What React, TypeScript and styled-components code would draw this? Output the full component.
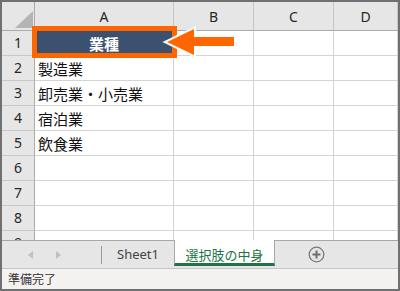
import React from "react";
import styled, { createGlobalStyle } from "styled-components";

const Global = createGlobalStyle`
  html, body { margin: 0; padding: 0; background: #fff; }
  body { font-family: "Noto Sans", "Noto Sans CJK JP", sans-serif; }
`;

const Frame = styled.div`
  width: 400px;
  height: 291px;
  box-sizing: border-box;
  border: 2px solid #707070;
  display: flex;
  flex-direction: column;
  overflow: hidden;
  background: #fff;
`;

const Sheet = styled.div`
  position: relative;
  height: 238px;
  flex: none;
  overflow: hidden;
`;

const Row = styled.div<{ $h: number }>`
  display: grid;
  grid-template-columns: 33px 139px 80px 80px 64px;
  height: ${(p) => p.$h}px;
`;

const Corner = styled.div`
  box-sizing: border-box;
  background: #e6e6e6;
  border-right: 1px solid #ababab;
  border-bottom: 1px solid #ababab;
  display: flex;
  align-items: flex-end;
  justify-content: flex-end;
  padding: 0 1px 2px 0;
`;

const ColHead = styled.div`
  box-sizing: border-box;
  background: #e6e6e6;
  border-right: 1px solid #c6c6c6;
  border-bottom: 1px solid #ababab;
  display: flex;
  align-items: center;
  justify-content: center;
  font-family: "Noto Sans", sans-serif;
  font-size: 14px;
  line-height: 1;
  color: #262626;
  padding-top: 2px;
`;

const RowHead = styled.div`
  box-sizing: border-box;
  background: #e6e6e6;
  border-right: 1px solid #ababab;
  border-bottom: 1px solid #c8c8c8;
  display: flex;
  align-items: center;
  justify-content: center;
  font-family: "Noto Sans", sans-serif;
  font-size: 14px;
  line-height: 1;
  color: #262626;
`;

const Cell = styled.div<{ $title?: boolean }>`
  box-sizing: border-box;
  border-right: 1px solid #d4d4d4;
  border-bottom: 1px solid #d4d4d4;
  display: flex;
  align-items: center;
  justify-content: ${(p) => (p.$title ? "center" : "flex-start")};
  padding-left: ${(p) => (p.$title ? 0 : 3)}px;
  background: ${(p) => (p.$title ? "#3b5170" : "#fff")};
  color: ${(p) => (p.$title ? "#fff" : "#111")};
  font-weight: ${(p) => (p.$title ? 700 : 400)};
  font-family: "Noto Sans CJK JP", sans-serif;
  font-size: 15px;
  line-height: 1;
  white-space: nowrap;
`;

const Highlight = styled.div`
  position: absolute;
  left: 30px;
  top: 24px;
  width: 145px;
  height: 32px;
  box-sizing: border-box;
  border: 5px solid #ff6600;
`;

const ArrowSvg = styled.svg`
  position: absolute;
  left: 158px;
  top: 20px;
`;

const TabBar = styled.div`
  height: 28px;
  box-sizing: border-box;
  flex: none;
  border-top: 1px solid #a8a8a8;
  background: #e6e6e6;
  display: flex;
  align-items: center;
`;

const NavArea = styled.div`
  width: 99px;
  height: 100%;
  display: flex;
  align-items: center;
  padding-left: 26px;
  gap: 23px;
  box-sizing: border-box;
`;

const Divider = styled.div`
  width: 1px;
  height: 18px;
  background: #9a9a9a;
  align-self: center;
`;

const Tab = styled.div`
  width: 72px;
  height: 100%;
  display: flex;
  align-items: center;
  justify-content: center;
  font-family: "Noto Sans", "Noto Sans CJK JP", sans-serif;
  font-size: 13px;
  line-height: 1;
  color: #444;
`;

const ActiveTab = styled.div`
  width: 101px;
  height: 26px;
  box-sizing: border-box;
  align-self: flex-start;
  margin-top: -1px;
  background: #fff;
  border-left: 1px solid #a8a8a8;
  border-right: 1px solid #a8a8a8;
  border-bottom: 3px solid #217346;
  display: flex;
  align-items: center;
  justify-content: center;
  padding-top: 5px;
  font-family: "Noto Sans CJK JP", sans-serif;
  font-size: 13px;
  line-height: 1;
  color: #217346;
`;

const AddButton = styled.div`
  margin-left: 33px;
  width: 17px;
  height: 17px;
  display: flex;
`;

const StatusBar = styled.div`
  flex: 1;
  box-sizing: border-box;
  border-top: 1px solid #c6c6c6;
  background: #f3f2f1;
  display: flex;
  align-items: center;
  padding-left: 6px;
  font-family: "Noto Sans CJK JP", sans-serif;
  font-size: 12px;
  line-height: 1;
  color: #333;
`;

const columns = ["A", "B", "C", "D"];
const values = ["業種", "製造業", "卸売業・小売業", "宿泊業", "飲食業", "", "", "", ""];

const NavArrow = ({ dir }: { dir: "left" | "right" }) => (
  <svg width="5" height="8" viewBox="0 0 5 8">
    {dir === "left" ? (
      <polygon points="5,0 0,4 5,8" fill="#c0c0c0" />
    ) : (
      <polygon points="0,0 5,4 0,8" fill="#c0c0c0" />
    )}
  </svg>
);

export default function App() {
  return (
    <>
      <Global />
      <Frame>
        <Sheet>
          <Row $h={29}>
            <Corner>
              <svg width="18" height="17" viewBox="0 0 18 17">
                <polygon points="0,17 18,17 18,0" fill="#b4b4b4" />
              </svg>
            </Corner>
            {columns.map((c) => (
              <ColHead key={c}>{c}</ColHead>
            ))}
          </Row>
          {values.map((v, i) => (
            <Row $h={25} key={i}>
              <RowHead>{i + 1}</RowHead>
              <Cell $title={i === 0}>{v}</Cell>
              <Cell />
              <Cell />
              <Cell />
            </Row>
          ))}
          <Highlight />
          <ArrowSvg width="80" height="40" viewBox="0 0 80 40">
            <polygon
              points="7,20 34,7 34,15 74,15 74,24 34,24 34,33"
              fill="#ff6600"
              stroke="#ffffff"
              strokeWidth="4"
              strokeLinejoin="miter"
              style={{ paintOrder: "stroke" }}
            />
          </ArrowSvg>
        </Sheet>
        <TabBar>
          <NavArea>
            <NavArrow dir="left" />
            <NavArrow dir="right" />
          </NavArea>
          <Divider />
          <Tab>Sheet1</Tab>
          <ActiveTab>選択肢の中身</ActiveTab>
          <AddButton>
            <svg width="17" height="17" viewBox="0 0 17 17">
              <circle cx="8.5" cy="8.5" r="7.3" fill="none" stroke="#7a7a7a" strokeWidth="1.3" />
              <line x1="4.5" y1="8.5" x2="12.5" y2="8.5" stroke="#6e6e6e" strokeWidth="2" />
              <line x1="8.5" y1="4.5" x2="8.5" y2="12.5" stroke="#6e6e6e" strokeWidth="2" />
            </svg>
          </AddButton>
        </TabBar>
        <StatusBar>準備完了</StatusBar>
      </Frame>
    </>
  );
}
